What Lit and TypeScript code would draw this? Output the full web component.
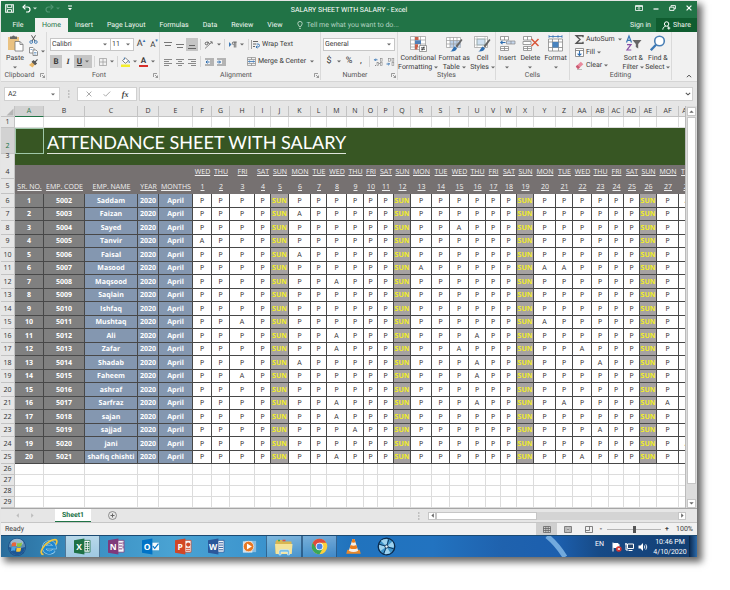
import { LitElement, html, svg, css, nothing } from "lit";
import { customElement } from "lit/decorators.js";
import { classMap } from "lit/directives/class-map.js";

/* ---------- sheet data ---------- */

const COLUMNS: [string, number][] = [
  ["A", 29], ["B", 41], ["C", 53], ["D", 21], ["E", 34], ["F", 19], ["G", 18], ["H", 25],
  ["I", 16], ["J", 18], ["K", 22], ["L", 16], ["M", 20], ["N", 17], ["O", 14], ["P", 16],
  ["Q", 17], ["R", 21], ["S", 18], ["T", 19], ["U", 17], ["V", 15], ["W", 16], ["X", 17],
  ["Y", 22], ["Z", 17], ["AA", 19], ["AB", 17], ["AC", 15], ["AD", 16], ["AE", 17], ["AF", 22],
  ["AG", 17],
];
const DAY_NAMES = ["SUN", "MON", "TUE", "WED", "THU", "FRI", "SAT"];
const DAYS = Array.from({ length: 28 }, (_, i) => i + 1);
const weekday = (day: number) => DAY_NAMES[(day + 2) % 7];

const EMPLOYEES: { name: string; absent: number[] }[] = [
  { name: "Saddam", absent: [28] },
  { name: "Faizan", absent: [6] },
  { name: "Sayed", absent: [15] },
  { name: "Tanvir", absent: [1] },
  { name: "Faisal", absent: [6] },
  { name: "Masood", absent: [13, 20, 21] },
  { name: "Maqsood", absent: [8] },
  { name: "Saqlain", absent: [] },
  { name: "Ishfaq", absent: [] },
  { name: "Mushtaq", absent: [3, 20] },
  { name: "Ali", absent: [8, 16] },
  { name: "Zafar", absent: [8, 15, 22] },
  { name: "Shadab", absent: [6, 16, 23] },
  { name: "Faheem", absent: [3, 16] },
  { name: "ashraf", absent: [] },
  { name: "Sarfraz", absent: [8, 16, 21, 27] },
  { name: "sajan", absent: [8] },
  { name: "sajjad", absent: [9, 23] },
  { name: "jani", absent: [28] },
  { name: "shafiq chishti", absent: [8, 22] },
];

/* ---------- icons ---------- */

const icon = (w: number, h: number, body: unknown) =>
  html`<svg width=${w} height=${h} viewBox="0 0 ${w} ${h}" fill="none" aria-hidden="true">${body}</svg>`;

const caret = html`<svg class="caret" width="4" height="3" viewBox="0 0 4 3" aria-hidden="true"><path d="M0 .4h4L2 2.6z" fill="#666" /></svg>`;
const launcher = html`<button class="launcher" aria-label="More options">${icon(5, 5, svg`<path d="M.5 4V.5H4M2 2l2.5 2.5M4.5 2.5v2h-2" stroke="#777" stroke-width=".7"/>`)}</button>`;

const lines = (ys: number[], xs: [number, number][], color = "#666") =>
  ys.map((y, i) => svg`<path d="M${xs[i % xs.length][0]} ${y}H${xs[i % xs.length][1]}" stroke=${color} stroke-width="1"/>`);

const I = {
  save: icon(9, 9, svg`<path d="M.7.7h7.6v7.6H.7z" stroke="#fff" stroke-width="1.1"/><path d="M2.3 1v2.6h4.4V1M2.5 8V5.6h4V8" stroke="#fff" stroke-width=".9"/>`),
  undo: icon(9, 9, svg`<path d="M1 3h4.5a2.4 2.4 0 0 1 0 5H4" stroke="#fff" stroke-width="1.2"/><path d="M3.4.6 1 3l2.4 2.4" stroke="#fff" stroke-width="1.2"/>`),
  redo: icon(9, 9, svg`<path d="M8 3H3.5a2.4 2.4 0 0 0 0 5H5" stroke="#4f9471" stroke-width="1.2"/><path d="M5.6.6 8 3 5.6 5.4" stroke="#4f9471" stroke-width="1.2"/>`),
  custom: icon(4, 6, svg`<path d="M0 1h4" stroke="#fff"/><path d="M0 3h4L2 5.2z" fill="#fff"/>`),
  wcaret: icon(4, 3, svg`<path d="M0 .4h4L2 2.6z" fill="#cfe3d7"/>`),
  gcaret: icon(4, 3, svg`<path d="M0 .4h4L2 2.6z" fill="#4f9471"/>`),
  ribbonOpt: icon(8, 6, svg`<path d="M.5.5h7v5h-7zM.5 1.5h7" stroke="#fff" stroke-width=".8"/><path d="M4 5V2.6M2.8 3.6 4 2.4l1.2 1.2" stroke="#fff" stroke-width=".7"/>`),
  min: icon(6, 6, svg`<path d="M.5 4h5" stroke="#fff" stroke-width="1.2"/>`),
  restore: icon(7, 6, svg`<path d="M2 2V.6h4.4v3.2H5M.6 2.2H5v3.2H.6z" stroke="#fff" stroke-width=".9"/>`),
  close: icon(6, 6, svg`<path d="m.6.6 4.8 4.8M5.4.6.6 5.4" stroke="#fff" stroke-width="1.2"/>`),
  bulb: icon(6, 8, svg`<path d="M2 5.4C1.900 4.400.8 4 .8 2.600a2.200 2.200 0 0 1 4.400 0C5.200 4 4.100 4.400 4 5.400zM2 7.300h2" stroke="#cfe3d7" stroke-width=".8"/>`),
  person: icon(9, 9, svg`<circle cx="4.600" cy="3" r="2.200" stroke="#fff" stroke-width="1"/><path d="M.8 8.600C1 6.500 2 5.600 3.600 5.300M5.400 5.300l1.200.6M6.800 5.600v3M5.300 7.100h3" stroke="#fff" stroke-width="1"/>`),
  paste: icon(17, 17, svg`<path d="M1 2h11v13H1z" fill="#eac282"/><path d="M3 1.500h2Q6.500-.6 8 1.500h2V4H3z" fill="#666"/><path d="M8 6.500h5l3 3V16H8z" fill="#fff" stroke="#777" stroke-width=".8"/><path d="M13 6.500v3h3" stroke="#777" stroke-width=".8"/>`),
  cut: icon(9, 9, svg`<path d="m2.500.3 3.600 6M6.500.3l-3.600 6" stroke="#555" stroke-width="1"/><circle cx="2.200" cy="7" r="1.400" stroke="#3b78b5" stroke-width=".9"/><circle cx="6.800" cy="7" r="1.400" stroke="#3b78b5" stroke-width=".9"/>`),
  copy: icon(9, 9, svg`<path d="M.5.500h3.500l1 1v4.500H.5z" fill="#fff" stroke="#777" stroke-width=".8"/><path d="M4 3h3l1.500 1.500v4H4z" fill="#fff" stroke="#777" stroke-width=".8"/><path d="M5 5.500h2.500M5 7h2.500M1.500 2.500h2" stroke="#3b78b5" stroke-width=".6"/>`),
  brush: icon(9, 9, svg`<path d="m0 6 3.500-3L6 5.500 3.500 8.500z" fill="#eab96a"/><path d="m3.300 2.800 1.200-1 2.800 2.700-1.200 1.100zM6 3l2.500-2.600" fill="#555" stroke="#555" stroke-width="1.100"/>`),
  borders: icon(8, 8, svg`<path d="M.5.500h7v7h-7zM4 .5v7M.5 4h7" stroke="#999" stroke-width=".7"/>`),
  bucket: icon(9, 10, svg`<path d="M1.500 3.500 4.500.9l3 3L4.300 6.300z" fill="#fff" stroke="#666" stroke-width=".8"/><path d="M3.400 2.500V.5M7.500 3.500q1.500 1.500.6 2.500" stroke="#3b78b5" stroke-width=".9"/><path d="M0 7.500h9V10H0z" fill="#f5ee2e"/>`),
  top: icon(8, 8, svg`<path d="M0 1.500h8M1 4.500h6" stroke="#777"/>`),
  mid: icon(8, 8, svg`<path d="M0 3.500h8M1 6.500h6" stroke="#777"/>`),
  bot: icon(8, 8, svg`<path d="M1 4.500h6M0 7.500h8" stroke="#666"/>`),
  left: icon(8, 8, lines([1.5, 3.5, 5.5, 7.5], [[0, 8], [0, 5]], "#8a8a8a")),
  center: icon(8, 8, lines([1.5, 3.5, 5.5, 7.5], [[0, 8], [2, 6]], "#8a8a8a")),
  right: icon(8, 8, lines([1.5, 3.5, 5.5, 7.5], [[0, 8], [3, 8]], "#8a8a8a")),
  orient: icon(10, 9, svg`<path d="M1 8.500 8 2M8.200 4V1.800H6" stroke="#666" stroke-width=".8"/><circle cx="2.500" cy="3.500" r="1.300" stroke="#555" stroke-width=".9"/><path d="M3.700 1.500 5.500 4" stroke="#555" stroke-width=".9"/>`),
  rtl: icon(8, 7, svg`<path d="M0 1v5l2.500-2.500z" fill="#3b78b5"/><path d="M7.700 1H4.600a1.300 1.300 0 0 0 0 2.600M5.300 1v5.500M6.800 1v5.500" stroke="#555" stroke-width=".8"/>`),
  outdent: icon(9, 8, svg`${lines([1, 7], [[0, 9]], "#777")}${lines([3, 5], [[5, 9]], "#777")}<path d="M4.500 4H1M2.500 2.500 1 4l1.500 1.500" stroke="#2f6fb2" stroke-width="1"/>`),
  indent: icon(9, 8, svg`${lines([1, 7], [[0, 9]], "#777")}${lines([3, 5], [[5, 9]], "#777")}<path d="M0 4h3.500M2 2.500 3.500 4 2 5.500" stroke="#2f6fb2" stroke-width="1"/>`),
  wrap: icon(9, 9, svg`<path d="M.5 0v9" stroke="#888" stroke-width=".8"/><path d="M2 1.500h5M2 4h3M2 6.500h2" stroke="#666" stroke-width="1"/><path d="M5.500 4H7a1.400 1.400 0 0 1 0 3H5M6.300 5.600 5 7l1.300 1.400" stroke="#2f6fb2" stroke-width=".9"/>`),
  merge: icon(9, 9, svg`<path d="M.5.500h8v8h-8zM.5 2.500h8M.5 6.500h8M4.500.5v2M4.500 6.500v2" stroke="#888" stroke-width=".7"/><path d="M1.500 4.500h6M2.600 3.500l-1 1 1 1M6.400 3.500l1 1-1 1" stroke="#2f6fb2" stroke-width=".8"/>`),
  incDec: icon(9, 8, svg`<path d="M3.500 1.800H.5M1.700.6.500 1.800 1.700 3" stroke="#2f6fb2" stroke-width=".9"/><path d="M4.800 5.500h1M1 7.500h1" stroke="#888"/><rect x="3" y="4.500" width="1.600" height="2.800" stroke="#888" stroke-width=".6"/><rect x="6.300" y=".6" width="1.800" height="2.600" stroke="#888" stroke-width=".6"/><rect x="6.300" y="4.500" width="1.800" height="2.800" stroke="#888" stroke-width=".6"/>`),
  decDec: icon(9, 8, svg`<path d="M.5 6h3M2.300 4.800 3.500 6 2.300 7.200" stroke="#2f6fb2" stroke-width=".9"/><rect x="2.500" y=".6" width="1.800" height="2.600" stroke="#888" stroke-width=".6"/><rect x="6" y=".6" width="1.800" height="2.600" stroke="#888" stroke-width=".6"/><rect x="6" y="4.500" width="1.800" height="2.800" stroke="#888" stroke-width=".6"/>`),
  cond: icon(17, 17, svg`<path d="M.5 1.500h15v13H.5zM5 1.500v13M10.500 1.500v13M.5 5h15M.5 9h15M.5 12h15" fill="#fff" stroke="#999" stroke-width=".7"/><path d="M5 2h3.500v3H5zM5 9.200h3v2.800H5z" fill="#c9604b"/><path d="M5 5.300h6V9H5z" fill="#4f7fb8"/><path d="M5 12h2.500v2.500H5z" fill="#c9604b"/><path d="M9.500 10.500h7v6h-7z" fill="#fff" stroke="#777" stroke-width=".7"/><path d="M11 12.800h4M11 14.300h4M14 11.500l-2 4" stroke="#333" stroke-width=".8"/>`),
  table: icon(17, 17, svg`<path d="M.5 2.500h14v10H.5z" fill="#fff" stroke="#999" stroke-width=".7"/><path d="M4 5.500h10.500v7H4z" fill="#bcd1ea"/><path d="M.5 5.500h14M.5 9h14M4 2.500v10M7.500 2.500v10M11 2.500v10" stroke="#999" stroke-width=".7"/><path d="m9.500 11 5.800-7 1.200 1-5.300 7.500z" fill="#666"/><path d="M4 16.500c2 .2 2.500-3.500 4.500-5l2.500 1.800c-.6 2.200-2.500 3.400-7 3.200z" fill="#2f6fb2"/>`),
  cell: icon(17, 17, svg`<path d="M.5 1.500h13v11H.5z" fill="#fff" stroke="#999" stroke-width=".7"/><path d="M3 4h8v6H3z" fill="#cfe0f1" stroke="#8aa" stroke-width=".7"/><path d="M.5 4H14M.5 10H14M3 1.500v11M11 1.500v11" stroke="#aaa" stroke-width=".5"/><path d="m9.500 11 5.800-7 1.200 1-5.300 7.500z" fill="#666"/><path d="M4 16.500c2 .2 2.500-3.500 4.500-5l2.500 1.800c-.6 2.200-2.500 3.400-7 3.200z" fill="#2f6fb2"/>`),
  insert: icon(17, 17, svg`<path d="M1.500 1.500h8V5h-8zM5.500 1.500V5M1.500 11.500h8v4h-8zM5.500 11.500v4M1.500 13.500h8" fill="#fff" stroke="#888" stroke-width=".8"/><path d="M7.500 6h8.500v3H7.500z" fill="#c6d8ee" stroke="#888" stroke-width=".7"/><path d="M12 6v3" stroke="#888" stroke-width=".7"/><path d="M6.500 7.500H1.500M3.500 5.800 1.700 7.500l1.800 1.700" stroke="#2f6fb2" stroke-width="1.100"/>`),
  del: icon(17, 17, svg`<path d="M1.500 1.500h8V5h-8zM5.500 1.500V5M1.500 11.500h8v4h-8zM5.500 11.500v4M1.500 13.500h8M1 6.500h8v3H1z" fill="#fff" stroke="#888" stroke-width=".8"/><path d="m9.500 4 7 7M16.500 4l-7 7" stroke="#d8573b" stroke-width="1.500"/>`),
  format: icon(17, 17, svg`<path d="M1.500 4h14v12h-14zM5.500 4v12M11.500 4v12M1.500 7h14M1.500 12.500h14" fill="#fff" stroke="#888" stroke-width=".8"/><path d="M5.500 7h6v5.500h-6z" fill="#4a84bf"/><path d="M2 1.500h13M2 .2v2.600M15 .2v2.600M6 .2v2.600M11 .2v2.600" stroke="#2f6fb2" stroke-width=".8"/>`),
  sum: icon(9, 9, svg`<path d="M8 2.200V.8H1.200L5 4.500 1.200 8.200H8V6.800" stroke="#555" stroke-width="1.400"/>`),
  fill: icon(9, 9, svg`<path d="M.5.500h8v8h-8zM.5 2.500h8" fill="#fff" stroke="#777" stroke-width=".8"/><path d="M4.500 3v4.500M2.600 5.600l1.900 1.900 1.900-1.900" stroke="#2f6fb2" stroke-width="1.100"/>`),
  clear: icon(9, 9, svg`<path d="m.8 5.500 5-4.800 2.500 2.500-4.800 4.600H2.600z" fill="#e98a9d"/><path d="m.8 5.500 1.500-1.500 2.600 2.500-1.400 1.300H2.600z" fill="#c85770"/><path d="M2 8.500h5" stroke="#999" stroke-width=".6"/>`),
  sort: icon(17, 17, svg`<path d="M1.500 7.500 4 1l2.500 6.500M2.300 5.300h3.400" stroke="#3b78b5" stroke-width="1.200"/><path d="M2 9.700h4L2 15h4.300" stroke="#8a4fa5" stroke-width="1.200"/><path d="M7.500 5h9l-3.300 4v4.500l-2.400-1.500V9z" fill="#666"/>`),
  find: icon(17, 17, svg`<circle cx="10.500" cy="6" r="4.800" fill="#fff" stroke="#4a7fb5" stroke-width="1.600"/><path d="M7 9.700 1.800 15.200" stroke="#3b78b5" stroke-width="2.400"/>`),
  up: icon(6, 4, svg`<path d="m.8 3.200 2.200-2 2.200 2" stroke="#555" stroke-width="1"/>`),
  down: icon(6, 4, svg`<path d="m.8.800 2.200 2 2.200-2" stroke="#555" stroke-width="1.100"/>`),
  dots: icon(2, 8, svg`<path d="M0 1h1.500M0 4h1.500M0 7h1.500" stroke="#999" stroke-width="1"/>`),
  cross: icon(6, 6, svg`<path d="m.6.600 4.800 4.800M5.400.600.6 5.400" stroke="#aaa"/>`),
  check: icon(8, 6, svg`<path d="m.6 3.200 2 2L7.200.600" stroke="#aaa"/>`),
  corner: icon(8, 8, svg`<path d="M7.500.5v7h-7z" fill="#b5b5b5"/>`),
  plus: icon(9, 9, svg`<circle cx="4.500" cy="4.500" r="4" stroke="#777" stroke-width=".8"/><path d="M2.500 4.500h4M4.500 2.500v4" stroke="#666"/>`),
  triL: icon(3, 5, svg`<path d="M2.800.300v4.400L.4 2.500z" fill="currentColor"/>`),
  triR: icon(3, 5, svg`<path d="M.2.300v4.400l2.400-2.200z" fill="currentColor"/>`),
  triU: icon(5, 3, svg`<path d="M.3 2.800h4.400L2.500.400z" fill="currentColor"/>`),
  triD: icon(5, 3, svg`<path d="M.3.200h4.400L2.500 2.600z" fill="currentColor"/>`),
  vNormal: icon(8, 7, svg`<path d="M.5.500h7v6h-7zM.5 2.500h7M.5 4.500h7M2.800.5v6M5.200.5v6" stroke="#666" stroke-width=".8"/>`),
  vPage: icon(8, 7, svg`<path d="M.5.500h7v6h-7zM2 .5v6M6 .5v6" stroke="#666" stroke-width=".8"/><path d="M3 2h2M3 3.500h2M3 5h2" stroke="#666" stroke-width=".7"/>`),
  vBreak: icon(8, 7, svg`<path d="M.5.500h7v6h-7zM.5 4.500h4V.5" stroke="#666" stroke-width=".8"/>`),
};

const officeIcon = (letter: string, dark: string, mid: string, sheet: unknown) =>
  html`<svg width="17" height="17" viewBox="0 0 18 18" aria-hidden="true">
    <path d="M9 2.500h8v12.500H9z" fill="#f6f8fa" stroke=${mid} stroke-width=".8" />${sheet}
    <path d="M0 2.500 11 .5v17L0 15.500z" fill=${dark} />
    <text x="5.500" y="12.500" text-anchor="middle" class="glyph">${letter}</text>
  </svg>`;

const T = {
  start: html`<svg width="20" height="20" viewBox="0 0 22 22" aria-hidden="true">
    <circle cx="11" cy="11" r="10" fill="#1d4f86" /><circle cx="11" cy="11" r="9" fill="#5d8db5" />
    <path d="M2 11a9 9 0 0 0 18 0q-9 3-18 0z" fill="#1c5796" /><ellipse cx="11" cy="6" rx="7" ry="4" fill="#b6cbd9" opacity=".7" />
    <path d="M5.500 6.500Q8 5 10.300 6.200L9.700 10.300Q7.500 9.300 5 10.500z" fill="#e8643a" />
    <path d="M11.300 6.500Q14 7.500 16.500 6l-.7 4.200q-2.500 1.300-5 .3z" fill="#8cc63f" />
    <path d="M4.900 11.500q2.400-1.200 4.700-.2L9 15.200Q6.700 14.200 4.300 15.500z" fill="#4ba3e3" />
    <path d="M10.600 11.700q2.500 1 5-.2l-.7 4.200q-2.500 1.200-4.900.2z" fill="#fbc834" /></svg>`,
  ie: html`<svg width="18" height="18" viewBox="0 0 18 18" fill="none" aria-hidden="true">
    <path d="M13.800 12.200A5.300 5.300 0 1 1 14.600 9.300H5" stroke="#bfe6fb" stroke-width="3.800" /><path d="M13.800 12.200A5.300 5.300 0 1 1 14.600 9.300H5" stroke="#1f86cf" stroke-width="2.900" />
    <path d="M3.500 16.500C-2 16.500 3 5.500 12.500 2c4.500-1.500 5.500 1 3.500 4.500" stroke="#f2c63c" stroke-width="1.700" /></svg>`,
  excel: officeIcon("X", "#1e7145", "#1e7145", svg`<path d="M12 5h1.800M12 7.500h1.800M12 10h1.800M12 12.500h1.800M14.600 5h1.600M14.600 7.500h1.600M14.600 10h1.600M14.600 12.500h1.600" stroke="#1e7145" stroke-width="1.500"/>`),
  onenote: officeIcon("N", "#80397b", "#80397b", svg`<path d="M11.500 5.500H15M11.500 8.500H15M11.500 11.500H15M16 4v3M16 8v3" stroke="#80397b" stroke-width="1"/>`),
  outlook: html`<svg width="17" height="17" viewBox="0 0 18 18" aria-hidden="true">
    <path d="M10 5h8v8h-8z" fill="#f6f8fa" /><path d="m11.500 8.500 2 2.500 4-5" stroke="#0072c6" stroke-width="1.200" fill="none" />
    <path d="M0 2.500 11 .5v17L0 15.500z" fill="#0072c6" /><text x="5.500" y="12.500" text-anchor="middle" class="glyph">O</text></svg>`,
  ppt: officeIcon("P", "#d24726", "#d24726", svg`<circle cx="14" cy="7" r="2.200" fill="#d24726"/><path d="M11.500 11H16M11.500 13H16" stroke="#d24726" stroke-width="1"/>`),
  word: officeIcon("W", "#2b579a", "#2b579a", svg`<path d="M11.500 5H16M11.500 7.500H16M11.500 10H16M11.500 12.500H16" stroke="#2b579a" stroke-width="1"/>`),
  player: html`<svg width="17" height="17" viewBox="0 0 18 18" aria-hidden="true"><path d="M4 3h12v12H4z" fill="#9cc7e6" opacity=".8" /><path d="M2 3.500h10v12H2z" fill="#cfe3f1" />
    <circle cx="8" cy="9" r="5.500" fill="#e87722" stroke="#fff" stroke-width=".6" /><path d="M6.300 5.800v6.400L11.500 9z" fill="#fff" /></svg>`,
  explorer: html`<svg width="20" height="18" viewBox="0 0 20 18" aria-hidden="true"><path d="M1.500 3.500 3 2h5l1 1.500h8.500v12h-16z" fill="#d9b651" /><path d="M4 2.500h2" stroke="#35a853" stroke-width="1.500" /><path d="M8.500 2.500h3" stroke="#e04a3f" stroke-width="1.500" />
    <path d="M1 6h17.500l-.8 10H1.800z" fill="#f4e39a" /><path d="M5 17v-3.500q0-2 2-2h6.500q2 0 2 2V17h-2v-3H7v3z" fill="#7cc0e6" stroke="#e7f5fc" stroke-width=".5" /></svg>`,
  chrome: html`<svg width="17" height="17" viewBox="0 0 18 18" aria-hidden="true"><circle cx="9" cy="9" r="8.200" fill="#fbd03b" />
    <path d="M9 9 1.900 4.900A8.200 8.200 0 0 0 9 17.200L12.500 11z" fill="#3aa757" />
    <path d="M9 9V4.900h7.100A8.200 8.200 0 0 0 1.900 4.900L5.500 11z" fill="#dd4b3e" />
    <circle cx="9" cy="9" r="4" fill="#fff" /><circle cx="9" cy="9" r="3.100" fill="#4a86e8" /></svg>`,
  vlc: html`<svg width="17" height="17" viewBox="0 0 18 18" aria-hidden="true"><path d="m2.500 12.500-1.200 4.300h15.400l-1.200-4.300z" fill="#e8892b" /><path d="M8 1h2l4 12.500q-5 2.500-10 0z" fill="#f4f0ea" />
    <path d="M8 1h2l1.200 3.500q-2.200 1-4.400 0zM5.900 7.500q3.100 1.300 6.200 0l1 3.300q-4.100 1.800-8.200 0z" fill="#e97d1e" /></svg>`,
  globe: html`<svg width="19" height="19" viewBox="0 0 19 19" aria-hidden="true"><circle cx="9.500" cy="9.500" r="8.300" fill="#3f93c8" stroke="#0d2a4a" stroke-width="1.300" />
    <path d="M9.500 9.500 3.800 3.800Q7 1.500 10.500 2zM9.500 9.500 15.500 4.500Q17.500 8 16.800 10.500zM9.500 9.500l4 6.500Q10 17.500 7.500 17zM9.500 9.500 3.500 14Q1.500 11 2 8z" fill="#9fd2ee" />
    <path d="M9.500 9.500 12 2M9.500 9.500l7.500 2.500M9.500 9.500 6.500 17M9.500 9.500 2 7" stroke="#0f3c66" stroke-width="1" /><circle cx="9.500" cy="9.500" r="1.600" fill="#e9f6fd" stroke="#0d2a4a" stroke-width=".8" /></svg>`,
  flag: html`<svg width="10" height="10" viewBox="0 0 10 10" aria-hidden="true"><path d="M1 .5v9M1.500 1.500H6l1 1v3H1.500z" fill="#fff" stroke="#fff" /><circle cx="6.800" cy="7" r="2.800" fill="#d6302b" /><path d="m5.700 5.900 2.200 2.200M7.900 5.900 5.700 8.100" stroke="#fff" stroke-width=".9" /></svg>`,
  net: html`<svg width="10" height="10" viewBox="0 0 10 10" fill="none" aria-hidden="true"><path d="M2.500 2h6v4.500h-6z" fill="#27466c" stroke="#fff" /><path d="M3.500 8.500h4M1 1v3.500M0 2h2M1 4.500V8h2" stroke="#fff" /></svg>`,
  sound: html`<svg width="10" height="10" viewBox="0 0 10 10" fill="none" aria-hidden="true"><path d="M.5 3.500h2L5 1v8L2.500 6.500h-2z" fill="#fff" /><path d="M6.300 3.500q1 1.500 0 3M7.800 2.300q2 2.700 0 5.400" stroke="#fff" stroke-width=".9" /></svg>`,
};

@customElement("app-root")
export class AppRoot extends LitElement {
  static styles = css`
    :host { display: block; background: #fff; padding: 1px 33px 33px 1px; font: 7px/9px Roboto, "Open Sans", sans-serif; color: #3a3a3a; text-rendering: geometricPrecision; }
    *, *::before { box-sizing: border-box; }
    svg { display: block; flex: none; overflow: visible; }
    button, input, select { font: inherit; color: inherit; background: none; border: 0; border-radius: 0; padding: 0; margin: 0; min-width: 0; outline: 0; appearance: none; text-rendering: inherit; }
    button { display: flex; align-items: center; justify-content: center; white-space: nowrap; }
    a { color: inherit; text-decoration: none; }
    .window { background: #e6e6e6; box-shadow: 4px 4px 7px 1px rgba(0, 0, 0, 0.6); }

    .title { display: grid; grid-template-columns: 1fr auto 1fr; align-items: center; height: 17px; padding-top: 1px; background: #217346; color: #fff; }
    .quick { display: flex; align-items: center; padding-left: 4px; gap: 8px; height: 12px; align-self: start; }
    .pair { display: flex; align-items: center; gap: 2px; }
    .caption { font-size: 7px; margin: 0; font-weight: 400; }
    .controls { display: flex; justify-content: flex-end; align-items: center; gap: 10px; padding-right: 5px; height: 12px; align-self: start; }
    .tabs { display: flex; height: 14px; background: #217346; color: #f2f8f4; align-items: stretch; }
    .tabs .tab { padding: 0 7px; }
    .tabs .file { width: 34px; }
    .tabs .on { width: 33px; background: #f1f1f1; color: #217346; }
    .tell { display: flex; align-items: center; gap: 3px; color: #b5d3c2; padding-left: 8px; }
    .tell input { width: 120px; }
    .tell input::placeholder { color: #b5d3c2; opacity: 1; }
    .sign { margin-left: auto; padding: 0 5px; display: flex; align-items: center; }
    .share { background: #0f5c2f; width: 41px; gap: 2px; }

    .ribbon { display: flex; height: 50px; background: #f1f1f1; border-bottom: 1px solid #d5d5d5; }
    .group { display: flex; flex-direction: column; justify-content: space-between; border-right: 1px solid #dadada; margin-bottom: 1px; }
    .body { display: flex; padding-top: 3px; height: 39px; }
    .foot { display: flex; height: 9px; align-items: center; color: #555; }
    .foot span { flex: 1; text-align: center; }
    .launcher { width: 8px; }
    .g-clip { width: 46px; } .g-font { width: 113px; } .g-align { width: 161px; } .g-num { width: 77px; }
    .g-style { width: 98px; } .g-cells { width: 74px; } .g-edit { width: 102px; }
    .big { flex-direction: column; justify-content: flex-start; text-align: center; line-height: 9px; gap: 2px; flex: 1 1 auto; }
    .big .line { display: flex; align-items: center; justify-content: center; gap: 2px; height: 9px; }
    .big .txt { display: block; }
    .g-clip .big { flex: 0 0 28px; }
    .stack { display: flex; flex-direction: column; align-items: flex-start; gap: 3px; }
    .rows { display: flex; flex-direction: column; gap: 4px; padding: 3px 2px 0; flex: 1; }
    .row { display: flex; align-items: center; height: 13px; }
    .combo { position: relative; display: flex; align-items: center; background: #fff; border: 1px solid #c6c6c6; height: 13px; }
    .combo select, .combo input { width: 100%; height: 100%; padding-left: 1px; }
    .combo .caret { position: absolute; right: 3px; pointer-events: none; }
    .c-face { width: 61px; } .c-size { width: 24px; margin-left: -1px; } .c-num { width: 72px; }
    .b { width: 12px; height: 13px; }
    .w8 { width: 8px; height: 13px; }
    .w14 { width: 14px; height: 13px; }
    .w18 { width: 18px; height: 13px; }
    .on2 { background: #c5c5c5; }
    .gap3 { gap: 3px; }
    .bold { font-weight: 700; font-size: 8px; } .ital { font-style: italic; font-family: "Liberation Serif", serif; font-weight: 700; font-size: 8px; } .und { text-decoration: underline; }
    .sep { width: 1px; height: 11px; background: #d5d5d5; margin: 0 2px; }
    .grow { font-size: 9px; align-items: center; }
    .shrink { font-size: 8px; }
    .sup { color: #2f6fb2; font-size: 5px; align-self: flex-start; line-height: 7px; }
    .red { border-bottom: 2px solid #d6302b; line-height: 8px; font-weight: 700; font-size: 8px; width: 9px; }
    .label { gap: 2px; justify-content: flex-start; }
    .sym { font-size: 9px; }
    .g-font .rows { padding-left: 3px; }
    .g-align .w18 { width: 19px; }
    .push { margin-left: auto; }
    .edit-list { display: flex; flex-direction: column; gap: 4px; padding: 0 0 0 5px; width: 52px; }
    .edit-list .label { height: 9px; }
    .collapse { margin-left: auto; align-self: flex-end; width: 16px; height: 10px; }

    .formula { display: flex; height: 24px; padding: 5px 4px 5px 3px; gap: 2px; background: #e6e6e6; }
    .formula .box { background: #fff; border: 1px solid #d0d0d0; height: 14px; display: flex; align-items: center; }
    .name { width: 56px; position: relative; }
    .name input { width: 100%; padding-left: 3px; }
    .name .caret { position: absolute; right: 4px; }
    .dots { width: 13px; display: flex; align-items: center; justify-content: center; height: 14px; }
    .fx { width: 60px; justify-content: space-around; padding: 0 2px; }
    .fxl { font: italic 700 8px/9px "Liberation Serif", serif; }
    .bar { flex: 1; } .bar input { flex: 1; } .bar button { width: 9px; }

    .sheet { display: flex; border-bottom: 1px solid #a6a6a6; font-family: "Open Sans", sans-serif; }
    .view { flex: 1; min-width: 0; overflow: hidden; background: #fff; border-right: 1px solid #bbb; }
    table { table-layout: fixed; width: 100%; border-collapse: separate; border-spacing: 0; }
    th, td { padding: 2px 0 0; height: 11px; text-align: center; white-space: nowrap; overflow: hidden; font-weight: 400; line-height: 8px; font-size: 7px; border: 0 solid #dcdcdc; border-width: 0 1px 1px 0; vertical-align: middle; }
    thead th { background: #e6e6e6; border-color: #c3c3c3; color: #333; }
    thead th svg { margin-left: 5px; }
    tbody th.num { background: #e6e6e6; border-color: #c3c3c3; color: #333; overflow: visible; }
    thead th.sel { background: #d2d2d2; color: #217346; border-bottom-color: #217346; }
    .r2 > * { height: 26px; } .r3 > * { height: 11px; } .r4 > * { height: 14px; } .r5 > * { height: 15px; }
    tbody th.num.sel { background: #d2d2d2; color: #217346; vertical-align: bottom; line-height: 12px; }
    .r3 th.num { vertical-align: top; padding: 0; line-height: 6px; border-bottom: 0; }
    td.green { background: #375623; border: 0; }
    td.cur { border: 1px solid #9fc7a8; }
    td.head { text-align: left; color: #fff; font: 18px/22px Lato, sans-serif; padding-left: 3px; }
    td.head span { border-bottom: 1px solid #dfe6db; display: inline-block; line-height: 22px; }
    td.grey { background: #767171; border: 0; color: #f0f0f0; text-decoration: underline; text-underline-offset: 1px; overflow: visible; }
    .rec > * { height: 13px; }
    .rec:nth-child(even) > * { height: 14px; }
    .rec td { border-color: #484848; color: #222; }
    .rec td.id { background: #808080; color: #fff; font-weight: 700; }
    .rec td.who { background: #8497b0; color: #fff; font-weight: 700; }
    .rec td.sun { background: #a6a2a2; color: #f2ee2a; font-weight: 700; }
    .vbar { width: 11px; display: flex; flex-direction: column; padding: 1px 1px 0; background: #dcdcdc; color: #666; }
    .vbar button { height: 9px; background: #fff; border: 1px solid #c6c6c6; }
    .vbar .thumb { flex: 1; background: #fff; border: 1px solid #c6c6c6; margin: 1px 0 15px; }

    .sheets { display: flex; height: 14px; align-items: center; background: #e6e6e6; border-bottom: 1px solid #c6c6c6; color: #bbb; }
    .sheets .nav { width: 15px; height: 13px; }
    .sheets .prev { margin-left: 9px; }
    .sheets .active { width: 36px; height: 13px; margin-left: 15px; background: #fff; color: #217346; font-weight: 700; border-bottom: 1px solid #217346; align-self: flex-start; }
    .sheets .add { margin-left: 17px; }
    .hscroll { display: flex; width: 258px; height: 8px; background: #d4d4d4; margin-right: 11px; color: #666; }
    .hscroll button { width: 8px; background: #fff; border: 1px solid #c6c6c6; }
    .hscroll .thumb { width: 101px; background: #fff; border: 1px solid #c6c6c6; margin-right: auto; }
    .grip { margin-left: auto; margin-right: 8px; }

    .status { display: flex; height: 12px; align-items: center; background: #f1f1f1; padding: 0 4px; }
    .status .modes { display: flex; margin-left: auto; }
    .status .modes button { width: 21px; height: 12px; }
    .status .modes .on { background: #cfcfcf; }
    .zoom { display: flex; align-items: center; gap: 4px; width: 70px; }
    .zoom button { width: 4px; font-weight: 700; }
    .zoom input { flex: 1; height: 8px; background: linear-gradient(#b5b5b5, #b5b5b5) center / 100% 1px no-repeat; }
    .zoom input::-webkit-slider-thumb { appearance: none; width: 3px; height: 7px; background: #555; }
    .pct { width: 24px; text-align: right; }

    .taskbar { display: flex; height: 22px; align-items: stretch; color: #fff; border-top: 1px solid #1b4a72;
      background: linear-gradient(90deg, #2a6d9c 0, #3a8fc2 12%, #4aa3d3 25%, #3b93cd 38%, #2173bd 50%, #2273c0 62%, #1f62ae 72%, #1c5fae 80%, #174a86 86%, #133e72 100%); }
    .apps { display: flex; width: 402px; }
    .apps button { flex: 1; }
    .apps .start { flex: 0 0 31px; }
    .apps .run { border: 1px solid rgba(20, 60, 100, 0.6); border-width: 0 1px; background: linear-gradient(rgba(255, 255, 255, 0.35), rgba(255, 255, 255, 0.12)); }
    .apps .focus { background: linear-gradient(#b8d8ea, #9fc9e2); }
    .streak { flex: 1; display: flex; justify-content: flex-end; overflow: hidden; }
    .glyph { font: 700 9px "Open Sans", sans-serif; fill: #fff; }
    .tray { display: flex; align-items: center; gap: 3px; }
    .lang { margin-right: 5px; line-height: 17px; align-self: flex-start; }
    .clock { text-align: center; line-height: 10px; width: 36px; margin: 0 1px; }
    .desk { width: 8px; background: linear-gradient(90deg, #0d2e57, #2c6bab); border-left: 1px solid #0c2748; }
  `;

  private big(pic: unknown, a: string, b?: string) {
    return html`<button class="big">${pic}<span class="txt"><span class="line">${a}</span><span class="line">${b ?? nothing}${caret}</span></span></button>`;
  }

  private group(cls: string, name: string, body: unknown, more = true) {
    return html`<section class="group ${cls}" aria-label=${name}><div class="body">${body}</div>
      <div class="foot"><span>${name}</span>${more ? launcher : nothing}</div></section>`;
  }

  private ribbon() {
    return html`<div class="ribbon">
      ${this.group("g-clip", "Clipboard", html`${this.big(I.paste, "Paste")}
        <div class="stack"><button aria-label="Cut">${I.cut}</button><button class="gap3" aria-label="Copy">${I.copy}${caret}</button><button aria-label="Format Painter">${I.brush}</button></div>`)}
      ${this.group("g-font", "Font", html`<div class="rows">
        <div class="row">
          <label class="combo c-face"><select aria-label="Font"><option>Calibri</option></select>${caret}</label>
          <label class="combo c-size"><select aria-label="Font size"><option>11</option></select>${caret}</label>
          <button class="w14 grow" aria-label="Grow font">A<span class="sup">▴</span></button>
          <button class="b shrink" aria-label="Shrink font">A<span class="sup">▾</span></button>
        </div>
        <div class="row">
          <button class="b on2 bold">B</button><button class="b ital">I</button><button class="w18 on2 gap3"><span class="bold und">U</span>${caret}</button>
          <span class="sep"></span><button class="w18 gap3" aria-label="Borders">${I.borders}${caret}</button>
          <span class="sep"></span><button class="w18 gap3" aria-label="Fill colour">${I.bucket}${caret}</button>
          <button class="w18 gap3" aria-label="Font colour"><span class="red">A</span>${caret}</button>
        </div></div>`)}
      ${this.group("g-align", "Alignment", html`<div class="rows">
        <div class="row">
          <button class="b" aria-label="Top">${I.top}</button><button class="b" aria-label="Middle">${I.mid}</button><button class="b on2" aria-label="Bottom">${I.bot}</button>
          <span class="sep"></span><button class="w18 gap3" aria-label="Orientation">${I.orient}${caret}</button>
          <span class="sep"></span><button class="w18 gap3" aria-label="Direction">${I.rtl}${caret}</button>
          <span class="sep"></span><button class="label">${I.wrap}Wrap Text</button>
        </div>
        <div class="row">
          <button class="b" aria-label="Left">${I.left}</button><button class="b" aria-label="Centre">${I.center}</button><button class="b" aria-label="Right">${I.right}</button>
          <span class="sep"></span><button class="b" aria-label="Decrease indent">${I.outdent}</button><button class="b" aria-label="Increase indent">${I.indent}</button>
          <button class="label push">${I.merge}Merge &amp; Center</button><button class="b" aria-label="Merge options">${caret}</button>
        </div></div>`)}
      ${this.group("g-num", "Number", html`<div class="rows">
        <div class="row"><label class="combo c-num"><select aria-label="Number format"><option>General</option></select>${caret}</label></div>
        <div class="row"><button class="b sym">$</button><button class="w8" aria-label="Currency">${caret}</button><button class="b sym">%</button><button class="b sym">,</button>
          <span class="sep"></span><button class="b" aria-label="Increase decimal">${I.incDec}</button><button class="b" aria-label="Decrease decimal">${I.decDec}</button></div></div>`)}
      ${this.group("g-style", "Styles", html`${this.big(I.cond, "Conditional", "Formatting")}${this.big(I.table, "Format as", "Table")}${this.big(I.cell, "Cell", "Styles")}`, false)}
      ${this.group("g-cells", "Cells", html`${this.big(I.insert, "Insert")}${this.big(I.del, "Delete")}${this.big(I.format, "Format")}`, false)}
      ${this.group("g-edit", "Editing", html`<div class="edit-list">
          <button class="label">${I.sum}AutoSum<span class="push">${caret}</span></button>
          <button class="label">${I.fill}Fill${caret}</button><button class="label">${I.clear}Clear${caret}</button></div>
        ${this.big(I.sort, "Sort &", "Filter")}${this.big(I.find, "Find &", "Select")}`, false)}
      <button class="collapse" aria-label="Collapse ribbon">${I.up}</button>
    </div>`;
  }

  private grid() {
    const blanks = COLUMNS.map(() => html`<td></td>`);
    return html`<table>
      <colgroup><col style="width:14px" />${COLUMNS.map(([, w]) => html`<col style="width:${w}px" />`)}<col /></colgroup>
      <thead><tr><th>${I.corner}</th>${COLUMNS.map(([c]) => html`<th scope="col" class=${classMap({ sel: c === "A" })}>${c}</th>`)}<th></th></tr></thead>
      <tbody>
        <tr><th class="num" scope="row">1</th>${blanks}<td></td></tr>
        <tr class="r2"><th class="num sel" scope="row">2</th><td class="green cur"></td><td class="green head" colspan="33"><span>ATTENDANCE SHEET WITH SALARY</span></td></tr>
        <tr class="r3"><th class="num" scope="row">3</th><td class="green" colspan="34"></td></tr>
        <tr class="r4"><th class="num" scope="row">4</th><td class="grey" colspan="5"></td>${DAYS.map((d) => html`<td class="grey">${weekday(d)}</td>`)}<td class="grey"></td></tr>
        <tr class="r5"><th class="num" scope="row">5</th>${["SR. NO.", "EMP. CODE", "EMP. NAME", "YEAR", "MONTHS", ...DAYS].map((t) => html`<td class="grey">${t}</td>`)}<td class="grey"></td></tr>
        ${EMPLOYEES.map((e, i) => html`<tr class="rec">
          <th class="num" scope="row">${i + 6}</th><td class="id">${i + 1}</td><td class="id">${5002 + i}</td>
          <td class="who">${e.name}</td><td class="who">2020</td><td class="who">April</td>
          ${DAYS.map((d) => weekday(d) === "SUN" ? html`<td class="sun">SUN</td>` : html`<td>${e.absent.includes(d) ? "A" : "P"}</td>`)}<td></td></tr>`)}
        ${[26, 27, 28, 29].map((n) => html`<tr><th class="num" scope="row">${n}</th>${blanks}<td></td></tr>`)}
      </tbody></table>`;
  }

  render() {
    return html`<main class="window">
      <header class="title">
        <div class="quick"><button aria-label="Save">${I.save}</button><button class="pair" aria-label="Undo">${I.undo}${I.wcaret}</button>
          <button class="pair" aria-label="Redo">${I.redo}${I.gcaret}</button><button aria-label="Customise toolbar">${I.custom}</button></div>
        <h1 class="caption">SALARY SHEET WITH SALARY - Excel</h1>
        <div class="controls"><button aria-label="Ribbon display">${I.ribbonOpt}</button><button aria-label="Minimise">${I.min}</button><button aria-label="Restore">${I.restore}</button><button aria-label="Close">${I.close}</button></div>
      </header>
      <nav class="tabs"><button class="tab file">File</button><button class="tab on">Home</button>
        ${["Insert", "Page Layout", "Formulas", "Data", "Review", "View"].map((t) => html`<button class="tab">${t}</button>`)}
        <label class="tell">${I.bulb}<input placeholder="Tell me what you want to do..." aria-label="Tell me" /></label>
        <a class="sign" href="#">Sign in</a><button class="share">${I.person}Share</button></nav>
      ${this.ribbon()}
      <div class="formula">
        <div class="box name"><input value="A2" aria-label="Name box" />${caret}</div><span class="dots">${I.dots}</span>
        <div class="box fx"><button aria-label="Cancel">${I.cross}</button><button aria-label="Enter">${I.check}</button><button class="fxl">fx</button></div>
        <div class="box bar"><input aria-label="Formula" /><button aria-label="Expand">${I.down}</button></div>
      </div>
      <div class="sheet"><div class="view">${this.grid()}</div>
        <div class="vbar"><button aria-label="Scroll up">${I.triU}</button><div class="thumb"></div><button aria-label="Scroll down">${I.triD}</button></div></div>
      <div class="sheets"><button class="nav prev" aria-label="Previous sheet">${I.triL}</button><button class="nav" aria-label="Next sheet">${I.triR}</button>
        <button class="active">Sheet1</button><button class="add" aria-label="New sheet">${I.plus}</button>
        <span class="grip">${I.dots}</span><div class="hscroll"><button aria-label="Scroll left">${I.triL}</button><div class="thumb"></div><button aria-label="Scroll right">${I.triR}</button></div></div>
      <footer class="status"><span>Ready</span>
        <div class="modes"><button class="on" aria-label="Normal">${I.vNormal}</button><button aria-label="Page layout">${I.vPage}</button><button aria-label="Page break">${I.vBreak}</button></div>
        <div class="zoom"><button>-</button><input type="range" min="0" max="200" value="100" aria-label="Zoom" /><button>+</button></div><span class="pct">100%</span></footer>
      <div class="taskbar"><div class="apps">
          <button class="start" aria-label="Start">${T.start}</button><button aria-label="Internet Explorer">${T.ie}</button><button class="run focus" aria-label="Excel">${T.excel}</button>
          <button aria-label="OneNote">${T.onenote}</button><button aria-label="Outlook">${T.outlook}</button><button aria-label="PowerPoint">${T.ppt}</button><button aria-label="Word">${T.word}</button>
          <button aria-label="Media Player">${T.player}</button><button class="run" aria-label="Explorer">${T.explorer}</button><button class="run" aria-label="Chrome">${T.chrome}</button>
          <button aria-label="VLC">${T.vlc}</button><button aria-label="Browser">${T.globe}</button></div>
        <div class="streak"><svg width="50" height="21" viewBox="0 0 50 21" fill="none" aria-hidden="true"><path d="M2 0Q12 8 20 21" stroke="#8fc3ee" stroke-width="5" opacity=".75"/></svg></div>
        <div class="tray"><span class="lang">EN</span>${T.flag}${T.net}${T.sound}<span class="clock">10:46 PM<br />4/10/2020</span></div><button class="desk" aria-label="Show desktop"></button></div>
    </main>`;
  }
}
